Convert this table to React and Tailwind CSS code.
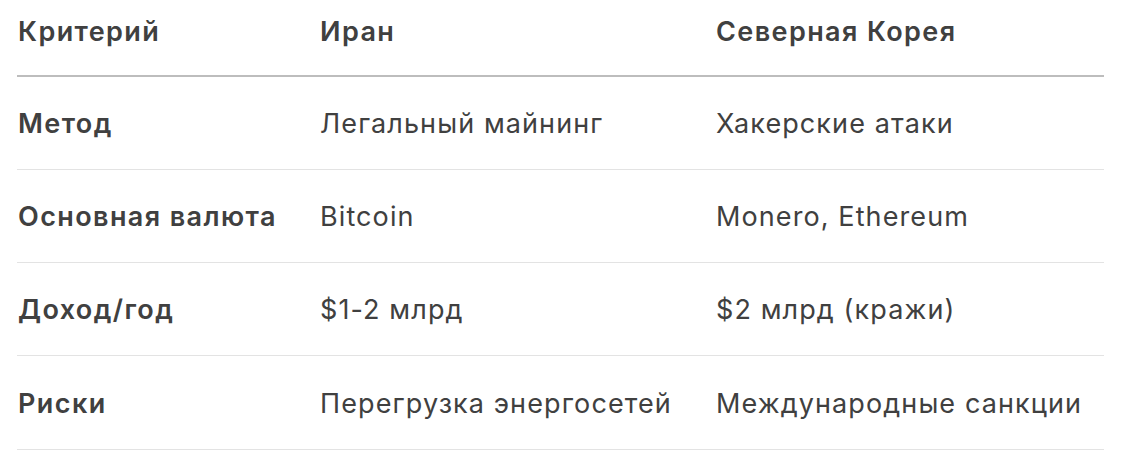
export default function App() {
  const rows = [
    ["Метод", "Легальный майнинг", "Хакерские атаки"],
    ["Основная валюта", "Bitcoin", "Monero, Ethereum"],
    ["Доход/год", "$1-2 млрд", "$2 млрд (кражи)"],
    ["Риски", "Перегрузка энергосетей", "Международные санкции"],
  ];
  return (
    <div className="w-[1132px] h-[452px] bg-white pl-[17px] pr-[28px]" style={{ fontFamily: "Inter, 'Noto Sans', sans-serif" }}>
      <table className="w-full border-collapse text-[27px] tracking-[1.1px] text-[#404040]">
        <thead>
          <tr className="border-b-2 border-[#bdbdbd]">
            <th className="w-[303px] h-[76px] pb-[10px] text-left font-semibold tracking-[1.4px] pl-px">Критерий</th>
            <th className="w-[396px] pb-[10px] text-left font-semibold tracking-[1.4px]">Иран</th>
            <th className="pb-[10px] text-left font-semibold tracking-[1.4px]">Северная Корея</th>
          </tr>
        </thead>
        <tbody>
          {rows.map((r, i) => (
            <tr key={i} className="border-b border-[#e3e3e3] h-[93.3px]">
              <td className="font-semibold tracking-[1.4px] pl-px pt-[3px]">{r[0]}</td>
              <td className="pt-[3px]">{r[1]}</td>
              <td className="pt-[3px]">{r[2]}</td>
            </tr>
          ))}
        </tbody>
      </table>
    </div>
  );
}
